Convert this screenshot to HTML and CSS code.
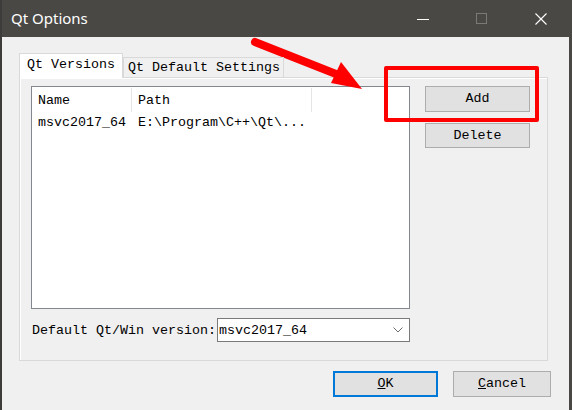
FILE: index.html
```html
<!DOCTYPE html>
<html>
<head>
<meta charset="utf-8">
<link rel="stylesheet" href="styles.css">
</head>
<body>
<div class="window">
  <div class="titlebar">
    <span class="title">Qt Options</span>
    <div class="controls">
      <span class="ctl"><svg width="12" height="12" viewBox="0 0 12 12"><path d="M0 6.5H12" stroke="#fff" stroke-width="1"/></svg></span>
      <span class="ctl"><svg width="12" height="12" viewBox="0 0 12 12"><rect x="0.5" y="0.5" width="10" height="10" fill="none" stroke="#7c7a77" stroke-width="1"/></svg></span>
      <span class="ctl"><svg width="12" height="12" viewBox="0 0 12 12"><path d="M0.5 0.5L11.5 11.5M11.5 0.5L0.5 11.5" stroke="#fff" stroke-width="1.1"/></svg></span>
    </div>
  </div>
  <div class="body">
    <div class="tabs">
      <div class="tabbar">
        <div class="tab active">Qt Versions</div>
        <div class="tab">Qt Default Settings</div>
      </div>
      <div class="pane">
        <div class="mainrow">
          <div class="tree">
            <div class="header">
              <div class="hcell c1">Name</div>
              <div class="hcell c2">Path</div>
              <div class="hcell c3"></div>
            </div>
            <div class="row">
              <div class="cell c1">msvc2017_64</div>
              <div class="cell c2">E:\Program\C++\Qt\...</div>
            </div>
          </div>
          <div class="sidebtns">
            <div class="btn">Add</div>
            <div class="btn">Delete</div>
          </div>
        </div>
        <div class="comborow">
          <span class="label">Default Qt/Win version:</span>
          <div class="combo">
            <span>msvc2017_64</span>
            <svg width="10" height="6" viewBox="0 0 10 6"><path d="M0.5 0.5L5 5L9.5 0.5" fill="none" stroke="#6d6d6d" stroke-width="1"/></svg>
          </div>
        </div>
      </div>
    </div>
    <div class="footer">
      <div class="btn ok"><u>O</u>K</div>
      <div class="btn cancel"><u>C</u>ancel</div>
    </div>
  </div>
  <div class="highlight"></div>
  <svg class="arrow" width="572" height="410" viewBox="0 0 572 410">
    <path d="M255 42L336 74" stroke="#ff0000" stroke-width="8" stroke-linecap="round"/>
    <polygon points="341,62 331,83 362,89" fill="#ff0000"/>
  </svg>
</div>
</body>
</html>
```
FILE: styles.css
```css
html, body {
  margin: 0;
  padding: 0;
}
body {
  width: 572px;
  height: 410px;
  overflow: hidden;
  background: #f0f0f0;
  font-family: "Liberation Mono", "DejaVu Sans Mono", monospace;
  font-size: 13.33px;
  color: #000;
}
.window {
  position: relative;
  width: 572px;
  height: 410px;
  box-sizing: border-box;
  border-left: 2px solid #3e3c3a;
  border-right: 3px solid #4a4845;
  background: #f0f0f0;
  display: flex;
  flex-direction: column;
}
.titlebar {
  height: 37px;
  background: #4a4845;
  display: flex;
  align-items: center;
  justify-content: space-between;
  flex-shrink: 0;
}
.title {
  font-family: "Noto Sans", "Open Sans", sans-serif;
  font-size: 15px;
  color: #fff;
  margin-left: 9px;
  margin-top: -1px;
}
.controls {
  display: flex;
  align-items: center;
  margin-right: 22px;
  gap: 47px;
}
.ctl {
  display: flex;
  width: 12px;
  height: 12px;
}
.body {
  display: flex;
  flex-direction: column;
  padding: 16px 0 0 17px;
}
.tabs {
  width: 529px;
}
.tabbar {
  display: flex;
  align-items: flex-end;
  height: 24px;
  position: relative;
  z-index: 1;
}
.tab {
  box-sizing: border-box;
  height: 20px;
  padding: 0 3px 0 4px;
  border: 1px solid #d9d9d9;
  border-bottom: none;
  background: #f0f0f0;
  line-height: 19px;
}
.tab.active {
  height: 24px;
  background: #fff;
  padding: 0 7px 0 7px;
  line-height: 22px;
  margin-bottom: -1px;
  height: 25px;
}
.pane {
  box-sizing: border-box;
  height: 284px;
  border: 1px solid #d9d9d9;
  box-shadow: inset 1px 1px 0 #fff;
  background: #f0f0f0;
  padding: 8px 17px 0 11px;
  display: flex;
  flex-direction: column;
}
.mainrow {
  display: flex;
  gap: 15px;
}
.tree {
  box-sizing: border-box;
  width: 379px;
  height: 223px;
  background: #fff;
  border: 1px solid #828790;
}
.header, .row {
  display: flex;
}
.header {
  height: 24px;
  margin-top: 1px;
}
.hcell, .cell {
  box-sizing: border-box;
  padding-left: 6px;
  white-space: nowrap;
}
.hcell {
  line-height: 26px;
  border-right: 1px solid #e5e5e5;
}
.c1 { width: 100px; }
.c2 { width: 180px; }
.c3 { width: 0; border-right: 1px solid #e5e5e5; }
.hcell.c3 { border-right: none; }
.hcell.c2 { border-right: 1px solid #e5e5e5; }
.cell {
  line-height: 22px;
}
.cell.c1 { width: 100px; }
.sidebtns {
  display: flex;
  flex-direction: column;
  gap: 11px;
}
.btn {
  box-sizing: border-box;
  background: #e1e1e1;
  border: 1px solid #adadad;
  text-align: center;
}
.sidebtns .btn {
  width: 105px;
  height: 26px;
  line-height: 24px;
}
.sidebtns .btn + .btn {
  height: 25px;
  margin-top: 0;
}
.comborow {
  display: flex;
  align-items: center;
  margin-top: 9px;
  padding-left: 1px;
}
.label {
  white-space: nowrap;
}
.combo {
  box-sizing: border-box;
  width: 193px;
  height: 24px;
  margin-left: 1px;
  background: #fff;
  border: 1px solid #7a7a7a;
  display: flex;
  align-items: center;
  justify-content: space-between;
  padding: 0 6px 0 1px;
}
.footer {
  display: flex;
  justify-content: flex-end;
  gap: 15px;
  padding-right: 18px;
  margin-top: 10px;
}
.footer .btn {
  height: 26px;
  line-height: 24px;
}
.ok {
  width: 105px;
  border: 2px solid #0078d7;
  line-height: 22px !important;
}
.cancel {
  width: 98px;
}
.highlight {
  position: absolute;
  left: 382px;
  top: 66px;
  width: 155px;
  height: 56px;
  box-sizing: border-box;
  border: 4px solid #ff0000;
  border-radius: 2px;
}
.arrow {
  position: absolute;
  left: -2px;
  top: 0;
  pointer-events: none;
}
```
